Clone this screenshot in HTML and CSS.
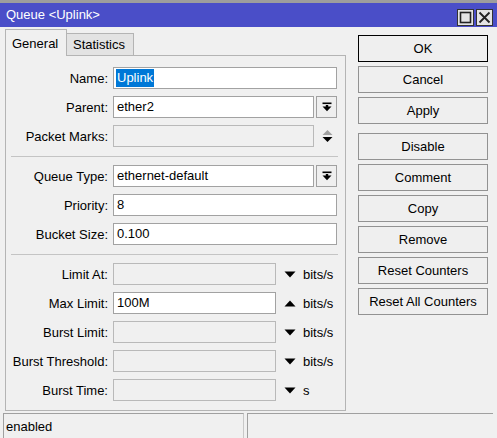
FILE: index.html
```html
<!DOCTYPE html>
<html>
<head>
<meta charset="utf-8">
<link rel="stylesheet" href="styles.css">
</head>
<body>
<div class="window">
  <div class="titlebar">
    <span class="title">Queue &lt;Uplink&gt;</span>
    <div class="winbtns">
      <span class="winbtn"><svg width="15" height="15" viewBox="0 0 15 15"><rect x="2.5" y="2.5" width="10" height="10" fill="none" stroke="#222" stroke-width="1.6"/></svg></span>
      <span class="winbtn"><svg width="15" height="15" viewBox="0 0 15 15"><path d="M2.5 2.5 L12.5 12.5 M12.5 2.5 L2.5 12.5" stroke="#222" stroke-width="1.8"/></svg></span>
    </div>
  </div>
  <div class="main">
    <div class="leftcol">
      <div class="tabs">
        <div class="tab active">General</div>
        <div class="tab">Statistics</div>
      </div>
      <div class="panel">
        <div class="row"><span class="lbl">Name:</span><div class="field full"><span class="sel">Uplink</span></div></div>
        <div class="row"><span class="lbl">Parent:</span><div class="field mid">ether2</div><span class="dd"><svg width="10" height="10" viewBox="0 0 10 10"><rect x="0.5" y="0.5" width="9" height="1.6" fill="#000"/><rect x="3.8" y="3" width="2.4" height="2" fill="#000"/><polygon points="0.5,4.6 9.5,4.6 5,9.2" fill="#000"/></svg></span></div>
        <div class="row"><span class="lbl">Packet Marks:</span><div class="field mid dis"></div><span class="updown"><svg width="11" height="14" viewBox="0 0 11 14"><polygon points="0.5,6 10.5,6 5.5,1" fill="#a0a0a0"/><polygon points="0.5,8 10.5,8 5.5,13" fill="#000"/></svg></span></div>
        <div class="sep"></div>
        <div class="row"><span class="lbl">Queue Type:</span><div class="field mid">ethernet-default</div><span class="dd"><svg width="10" height="10" viewBox="0 0 10 10"><rect x="0.5" y="0.5" width="9" height="1.6" fill="#000"/><rect x="3.8" y="3" width="2.4" height="2" fill="#000"/><polygon points="0.5,4.6 9.5,4.6 5,9.2" fill="#000"/></svg></span></div>
        <div class="row"><span class="lbl">Priority:</span><div class="field full">8</div></div>
        <div class="row"><span class="lbl">Bucket Size:</span><div class="field full">0.100</div></div>
        <div class="sep"></div>
        <div class="row"><span class="lbl">Limit At:</span><div class="field short dis"></div><span class="arr"><svg width="12" height="7" viewBox="0 0 12 7"><polygon points="0.5,0.5 11.5,0.5 6,6.5" fill="#000"/></svg></span><span class="unit">bits/s</span></div>
        <div class="row"><span class="lbl">Max Limit:</span><div class="field short">100M</div><span class="arr"><svg width="12" height="7" viewBox="0 0 12 7"><polygon points="0.5,6.5 11.5,6.5 6,0.5" fill="#000"/></svg></span><span class="unit">bits/s</span></div>
        <div class="row"><span class="lbl">Burst Limit:</span><div class="field short dis"></div><span class="arr"><svg width="12" height="7" viewBox="0 0 12 7"><polygon points="0.5,0.5 11.5,0.5 6,6.5" fill="#000"/></svg></span><span class="unit">bits/s</span></div>
        <div class="row"><span class="lbl">Burst Threshold:</span><div class="field short dis"></div><span class="arr"><svg width="12" height="7" viewBox="0 0 12 7"><polygon points="0.5,0.5 11.5,0.5 6,6.5" fill="#000"/></svg></span><span class="unit">bits/s</span></div>
        <div class="row"><span class="lbl">Burst Time:</span><div class="field short dis"></div><span class="arr"><svg width="12" height="7" viewBox="0 0 12 7"><polygon points="0.5,0.5 11.5,0.5 6,6.5" fill="#000"/></svg></span><span class="unit">s</span></div>
      </div>
    </div>
    <div class="rightcol">
      <div class="btn default">OK</div>
      <div class="btn">Cancel</div>
      <div class="btn">Apply</div>
      <div class="btn spaced">Disable</div>
      <div class="btn">Comment</div>
      <div class="btn">Copy</div>
      <div class="btn">Remove</div>
      <div class="btn">Reset Counters</div>
      <div class="btn">Reset All Counters</div>
    </div>
  </div>
  <div class="statusbar">
    <div class="stat left">enabled</div>
    <div class="stat right"></div>
  </div>
</div>
</body>
</html>
```

FILE: styles.css
```css
html, body {
  margin: 0;
  padding: 0;
  background: #f0f0f0;
  overflow: hidden;
}
body {
  font-family: "Liberation Sans", Arial, sans-serif;
  font-size: 13px;
  color: #000;
}
.window {
  width: 497px;
  height: 438px;
  border-top: 3px solid #9d9d9d;
  box-sizing: border-box;
}
.titlebar {
  height: 24px;
  background: #4a4ec8;
  display: flex;
  align-items: center;
  justify-content: space-between;
}
.title {
  color: #fff;
  padding-left: 6px;
  line-height: 24px;
}
.winbtns {
  display: flex;
  gap: 2px;
  margin-right: 4px;
  margin-top: 5px;
}
.winbtn {
  width: 17px;
  height: 17px;
  box-sizing: border-box;
  border: 1px solid #333;
  background: #e4e4e4;
  display: flex;
  align-items: center;
  justify-content: center;
}
.main {
  display: flex;
  height: 384px;
}
.leftcol {
  margin-left: 5px;
  padding-top: 2px;
}
.tabs {
  display: flex;
  align-items: flex-end;
  height: 26px;
}
.tab {
  box-sizing: border-box;
  border: 1px solid #b4b4b4;
  border-bottom: none;
  display: flex;
  align-items: center;
}
.tab.active {
  height: 27px;
  width: 62px;
  margin-bottom: -1px;
  background: #f0f0f0;
  padding-left: 6px;
  position: relative;
  z-index: 1;
}
.tab:not(.active) {
  height: 22px;
  width: 67px;
  border-left: none;
  background: #e3e3e3;
  padding-left: 6px;
}
.panel {
  box-sizing: border-box;
  width: 341px;
  height: 356px;
  border: 1px solid #b4b4b4;
  padding: 11px 7px 9px 0;
  display: flex;
  flex-direction: column;
  gap: 7px;
}
.row {
  display: flex;
  align-items: center;
  height: 22px;
}
.lbl {
  width: 102px;
  margin-right: 5px;
  text-align: right;
  white-space: nowrap;
}
.field {
  box-sizing: border-box;
  height: 22px;
  border: 1px solid #a2a2a2;
  background: #fff;
  padding-left: 3px;
  line-height: 20px;
  white-space: nowrap;
}
.field.full { width: 224px; }
.field.mid { width: 201px; }
.field.short { width: 163px; }
.field.dis { background: #f0f0f0; border-color: #b9b9b9; }
.sel {
  background: #0078d7;
  color: #fff;
  display: inline-block;
  line-height: 18px;
  padding: 0 1px;
  margin-left: -1px;
}
.dd {
  box-sizing: border-box;
  width: 21px;
  height: 22px;
  margin-left: 2px;
  border: 1px solid #a0a0a0;
  background: #efefef;
  display: flex;
  align-items: center;
  justify-content: center;
}
.updown {
  display: flex;
  margin-left: 8px;
}
.arr {
  display: flex;
  margin-left: 8px;
  margin-right: 7px;
}
.sep {
  height: 1px;
  background: #c4c4c4;
  margin: 2px 0 1px 5px;
}
.rightcol {
  margin-left: 12px;
  padding-top: 8px;
  display: flex;
  flex-direction: column;
  gap: 4px;
}
.btn {
  box-sizing: border-box;
  width: 130px;
  height: 27px;
  border: 1px solid #929292;
  background: #efefef;
  display: flex;
  align-items: center;
  justify-content: center;
}
.btn.default {
  border: 1px solid #000;
}
.btn.spaced {
  margin-top: 5px;
}
.statusbar {
  display: flex;
  margin-top: 2px;
  height: 25px;
}
.stat {
  box-sizing: border-box;
  height: 25px;
  border-top: 1px solid #a0a0a0;
  border-left: 1px solid #a0a0a0;
  display: flex;
  align-items: center;
}
.stat.left {
  margin-left: 3px;
  width: 241px;
  border-right: 1px solid #c8c8c8;
  padding-left: 2px;
}
.stat.right {
  margin-left: 3px;
  width: 246px;
}
```
